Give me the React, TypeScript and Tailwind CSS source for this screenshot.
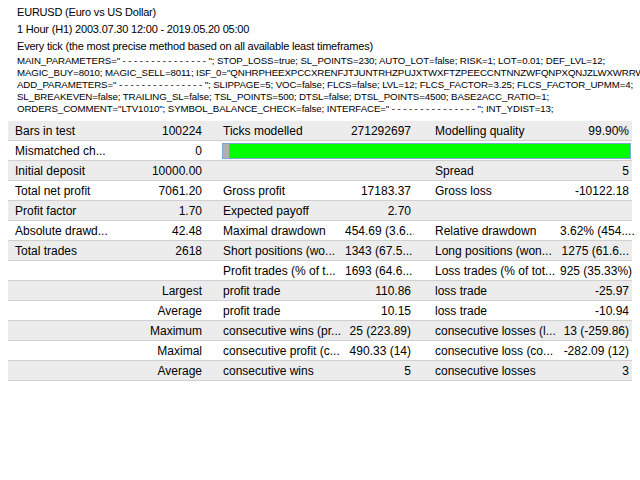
type Cell = string;

const rows: Cell[][] = [
  ["Bars in test", "100224", "Ticks modelled", "271292697", "Modelling quality", "99.90%"],
  ["Mismatched ch...", "0", "BAR", "", "", ""],
  ["Initial deposit", "10000.00", "", "", "Spread", "5"],
  ["Total net profit", "7061.20", "Gross profit", "17183.37", "Gross loss", "-10122.18"],
  ["Profit factor", "1.70", "Expected payoff", "2.70", "", ""],
  ["Absolute drawd...", "42.48", "Maximal drawdown", "454.69 (3.6...", "Relative drawdown", "3.62% (454...."],
  ["Total trades", "2618", "Short positions (wo...", "1343 (67.5...", "Long positions (won...", "1275 (61.6..."],
  ["", "", "Profit trades (% of t...", "1693 (64.6...", "Loss trades (% of tot...", "925 (35.33%)"],
  ["", "Largest", "profit trade", "110.86", "loss trade", "-25.97"],
  ["", "Average", "profit trade", "10.15", "loss trade", "-10.94"],
  ["", "Maximum", "consecutive wins (pr...", "25 (223.89)", "consecutive losses (l...", "13 (-259.86)"],
  ["", "Maximal", "consecutive profit (c...", "490.33 (14)", "consecutive loss (co...", "-282.09 (12)"],
  ["", "Average", "consecutive wins", "5", "consecutive losses", "3"],
];

const header = [
  "EURUSD (Euro vs US Dollar)",
  "1 Hour (H1) 2003.07.30 12:00 - 2019.05.20 05:00",
  "Every tick (the most precise method based on all available least timeframes)",
];

const params = [
  'MAIN_PARAMETERS=" - - - - - - - - - - - - - - - "; STOP_LOSS=true; SL_POINTS=230; AUTO_LOT=false; RISK=1; LOT=0.01; DEF_LVL=12;',
  'MAGIC_BUY=8010; MAGIC_SELL=8011; ISF_0="QNHRPHEEXPCCXRENFJTJUNTRHZPUJXTWXFTZPEECCNTNNZWFQNPXQNJZLWXWRRWXPA";',
  'ADD_PARAMETERS=" - - - - - - - - - - - - - - - "; SLIPPAGE=5; VOC=false; FLCS=false; LVL=12; FLCS_FACTOR=3.25; FLCS_FACTOR_UPMM=4;',
  "SL_BREAKEVEN=false; TRAILING_SL=false; TSL_POINTS=500; DTSL=false; DTSL_POINTS=4500; BASE2ACC_RATIO=1;",
  'ORDERS_COMMENT="LTV1010"; SYMBOL_BALANCE_CHECK=false; INTERFACE=" - - - - - - - - - - - - - - - "; INT_YDIST=13;',
];

export default function App() {
  return (
    <div className="w-[640px] h-[480px] bg-white text-black overflow-hidden" style={{ fontFamily: '"Liberation Sans", Arial, sans-serif' }}>
      <div className="pl-[17px] pt-[4px]">
        {header.map((h) => (
          <div key={h} className="text-[11px] leading-[17px] tracking-[-0.2px]">{h}</div>
        ))}
        {params.map((p) => (
          <div key={p} className="whitespace-nowrap text-[9.7px] leading-[12px] tracking-[-0.1px]">{p}</div>
        ))}
      </div>
      <div className="mt-[6px] ml-[8px] w-[624px] text-[12px]">
        {rows.map((r, i) => (
          <div
            key={i}
            className={`grid grid-cols-[142px_56px_139px_69px_146px_72px] h-[20px] items-center border-b border-[#d0d0d0] ${i % 2 === 0 ? "bg-[#ececec]" : "bg-white"}`}
          >
            {r[2] === "BAR" ? (
              <>
                <div className="pl-[7px] truncate">{r[0]}</div>
                <div className="text-right pr-[4px]">{r[1]}</div>
                <div className="col-span-4 pl-[16px] pr-[1px] h-[20px] flex items-center">
                  <div className="w-full h-[16px] border border-[#7aa7d8] bg-[#00ff00] flex">
                    <div className="w-[6px] h-full bg-[#b0b0b0]" />
                  </div>
                </div>
              </>
            ) : (
              <>
                <div className="pl-[7px] truncate whitespace-nowrap">{r[0]}</div>
                <div className="text-right pr-[4px] whitespace-nowrap">{r[1]}</div>
                <div className="pl-[17px] whitespace-nowrap overflow-hidden">{r[2]}</div>
                <div className="text-right pr-[3px] whitespace-nowrap overflow-hidden">{r[3]}</div>
                <div className="pl-[21px] whitespace-nowrap overflow-hidden">{r[4]}</div>
                <div className="text-right pr-[3px] whitespace-nowrap">{r[5]}</div>
              </>
            )}
          </div>
        ))}
      </div>
    </div>
  );
}
